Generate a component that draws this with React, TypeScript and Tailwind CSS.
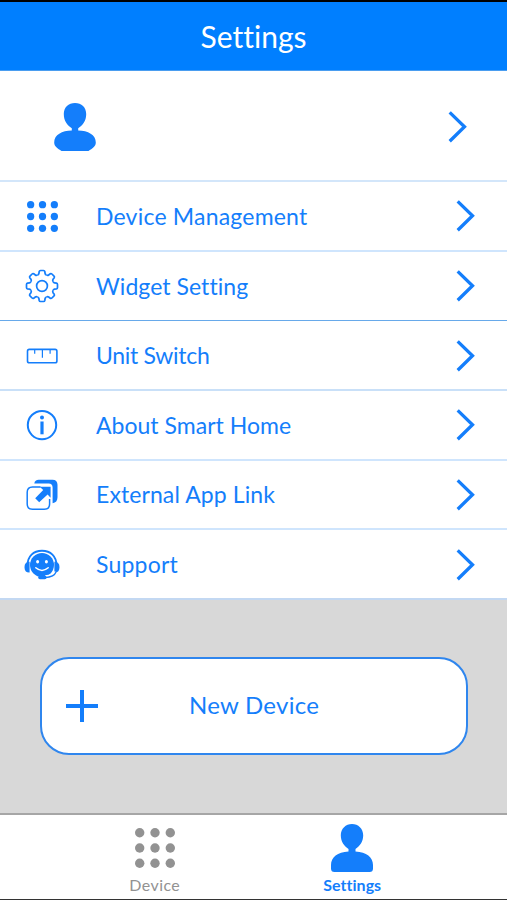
import type { ReactNode } from 'react'

const toothAngles = [0, 45, 90, 135, 180, 225, 270, 315]
const dotSteps = [0, 1, 2]

function DotsIcon({ className }: { className: string }) {
  return (
    <svg className={className} viewBox="0 0 40 40" fill="currentColor">
      {dotSteps.map((row) =>
        dotSteps.map((col) => (
          <circle key={`${row}-${col}`} cx={4.7 + col * 15.3} cy={4.7 + row * 15.3} r="4.7" />
        ))
      )}
    </svg>
  )
}

function GearIcon() {
  return (
    <svg className="w-9 h-9" viewBox="-18 -18 36 36" fill="none" stroke="currentColor" strokeWidth="1.7">
      {toothAngles.map((angle) => (
        <path
          key={angle}
          transform={`rotate(${angle})`}
          d="M-4.6 -11.1Q-3.3 -11.3 -3.1 -12.5L-2.8 -14.5Q-2.6 -15.5 -1.5 -15.5H1.5Q2.6 -15.5 2.8 -14.5L3.1 -12.5Q3.3 -11.3 4.6 -11.1"
        />
      ))}
      <circle r="5.4" />
    </svg>
  )
}

function RulerIcon() {
  return (
    <svg className="w-9 h-9" viewBox="0 0 36 36" fill="none" stroke="currentColor" strokeWidth="1.6">
      <rect x="3.5" y="11.4" width="29.4" height="13.3" rx="1.8" />
      <path d="M10.7 12V15.8M18.4 12V19.8M26.1 12V15.8" strokeWidth="1.2" />
    </svg>
  )
}

function InfoIcon() {
  return (
    <svg className="w-9 h-9" viewBox="0 0 36 36" fill="none" stroke="currentColor">
      <circle cx="18" cy="18.1" r="14.2" strokeWidth="2" />
      <path d="M18 14.5V27.3" strokeWidth="3.2" />
      <circle cx="18" cy="10.5" r="2" fill="currentColor" stroke="none" />
    </svg>
  )
}

function LinkIcon() {
  return (
    <svg className="w-9 h-9" viewBox="0 0 36 36" fill="none">
      <path
        d="M10.3 6.6C10.7 4 12.2 2.8 14.7 2.8H28.5C31.7 2.8 33.5 4.7 33.5 7.8V20.3C33.5 23.8 31.8 25.9 28.6 26.2V10.5C28.6 8.2 27.1 6.6 24.8 6.6Z"
        fill="currentColor"
      />
      <path
        d="M16.5 9.9H8.5Q3.2 9.9 3.2 15.2V27Q3.2 32.3 8.5 32.3H20.3Q25.6 32.3 25.6 27V22"
        stroke="currentColor"
        strokeWidth="1.5"
      />
      <path d="M15.7 9.7H26.6V20.8L23.6 17.6L15.2 25.2L11.2 21.2L19.2 13Z" fill="currentColor" />
    </svg>
  )
}

function SupportIcon() {
  return (
    <svg className="w-9 h-9" viewBox="0 0 36 36" fill="none">
      <path d="M3.5 18.5C3.5 9 9.5 3.8 18 3.8S32.5 9 32.5 18.5" stroke="currentColor" strokeWidth="1.9" />
      <circle cx="18" cy="18" r="12" fill="currentColor" />
      <path
        d="M5.6 14.8V25.5C2.2 25.7 .5 23.8 .5 20.2S2.2 14.7 5.6 14.8ZM30.4 14.8V25.5C33.8 25.7 35.5 23.8 35.5 20.2S33.8 14.7 30.4 14.8Z"
        fill="currentColor"
      />
      <path d="M31.5 24.7C30 27.7 26.5 29 21 29.2" stroke="white" strokeWidth="2" />
      <path d="M32 25C30.8 28.6 26.8 30.2 21 30.6" stroke="currentColor" strokeWidth="1.3" />
      <rect x="14.2" y="28.6" width="8.4" height="3.6" rx="1.8" fill="currentColor" />
      <ellipse cx="13.6" cy="14.8" rx="1.5" ry="1.8" fill="white" />
      <ellipse cx="22.4" cy="14.8" rx="1.5" ry="1.8" fill="white" />
      <path d="M11.8 20.8Q18 26.2 24.2 20.8" stroke="white" strokeWidth="1.5" strokeLinecap="round" />
    </svg>
  )
}

function Chevron() {
  return (
    <svg className="w-5 h-8" viewBox="0 0 20 32" fill="none" stroke="currentColor" strokeWidth="3.3">
      <path d="M1.7 1.4L16.5 15.8L1.7 30.2" />
    </svg>
  )
}

type Item = {
  label: string
  icon: ReactNode
  tracking: string
  border: string
}

const items: Item[] = [
  {
    label: 'Device Management',
    icon: <DotsIcon className="w-[31px] h-[31px]" />,
    tracking: 'tracking-[0.2px]',
    border: 'border-b-2 border-[#cfe5fd]'
  },
  { label: 'Widget Setting', icon: <GearIcon />, tracking: 'tracking-[0.06px]', border: 'border-b border-[#67a9ea]' },
  { label: 'Unit Switch', icon: <RulerIcon />, tracking: 'tracking-[-0.3px]', border: 'border-b-2 border-[#c9e0f8]' },
  { label: 'About Smart Home', icon: <InfoIcon />, tracking: 'tracking-[0.02px]', border: 'border-b-2 border-[#cfe5fd]' },
  { label: 'External App Link', icon: <LinkIcon />, tracking: 'tracking-[0.1px]', border: 'border-b-2 border-[#cfe5fd]' },
  { label: 'Support', icon: <SupportIcon />, tracking: 'tracking-[0.2px]', border: 'border-b-2 border-[#c3d8f2]' }
]

export default function App() {
  return (
    <div className="flex h-[900px] w-[507px] flex-col overflow-hidden border-t-2 border-b border-t-black border-b-[#333] bg-white font-['Lato',sans-serif] text-[#147efb]">
      <header className="flex h-[69px] shrink-0 items-center justify-center border-b border-[#4a9df0] bg-[#007fff] text-white">
        <h1 className="text-[30px] leading-none tracking-[0.02px]">Settings</h1>
      </header>

      {/* Account */}
      <button className="flex h-[111px] shrink-0 items-center justify-between border-b-2 border-[#d3e6fa] pl-[54px] pr-[39px] pt-0.5">
        <svg className="w-[42px] h-[50px]" viewBox="0 0 42 50" fill="currentColor">
          <path d="M21 1C27.5 1 32.2 5.4 32.2 12C32.2 18.8 28.8 23.2 24.2 26.2V28.6C34 28.8 41.8 32.8 41.8 40.5C41.8 44.5 38.3 46.5 34.5 49H7.5C3.7 46.5 .2 44.5 .2 40.5C.2 32.8 8 28.8 17.8 28.6V26.2C13.2 23.2 9.8 18.8 9.8 12C9.8 5.4 14.5 1 21 1Z" />
        </svg>
        <Chevron />
      </button>

      <nav className="grid h-[418px] shrink-0 grid-rows-6">
        {items.map((item) => (
          <button key={item.label} className={`flex items-center pl-6 pr-[31px] pt-px text-left ${item.border}`}>
            <span className="flex w-9 justify-center">{item.icon}</span>
            <span className={`ml-9 flex-1 text-[23px] leading-none ${item.tracking}`}>{item.label}</span>
            <Chevron />
          </button>
        ))}
      </nav>

      <main className="flex-1 bg-[#d8d8d8] pl-10 pr-[39px] pt-[57px]">
        <button className="flex h-[98px] w-full items-center rounded-[29px] border-2 border-[#2f86ee] bg-white pl-[23px]">
          <svg className="w-[34px] h-[34px]" viewBox="0 0 34 34" stroke="currentColor" strokeWidth="4">
            <path d="M1 17H33M17 1V33" />
          </svg>
          <span className="-mt-0.5 ml-[90px] text-[24px] leading-none tracking-[0.25px]">New Device</span>
        </button>
      </main>

      <footer className="flex h-[86px] shrink-0 border-t-2 border-[#a6a6a6] px-14">
        <button className="flex flex-1 flex-col items-center pt-[13px] text-[#929292]">
          <DotsIcon className="w-10 h-10" />
          <span className="mt-[7px] text-[16px] leading-5 tracking-[0.4px]">Device</span>
        </button>
        <button className="flex flex-1 flex-col items-center pt-[9px]">
          <svg className="w-[42px] h-[48px]" viewBox="0 0 42 48" fill="currentColor">
            <path d="M21 0C27.3 0 32.2 4.8 32.2 11.3C32.2 17.8 28.8 22.2 24.5 25V27.6C35.5 28.2 42 33.5 42 41V44.5Q42 48 38.5 48H3.5Q0 48 0 44.5V41C0 33.5 6.5 28.2 17.5 27.6V25C13.2 22.2 9.8 17.8 9.8 11.3C9.8 4.8 14.7 0 21 0Z" />
          </svg>
          <span className="mt-[3px] text-[16px] font-bold leading-5 tracking-[0.02px]">Settings</span>
        </button>
      </footer>
    </div>
  )
}
